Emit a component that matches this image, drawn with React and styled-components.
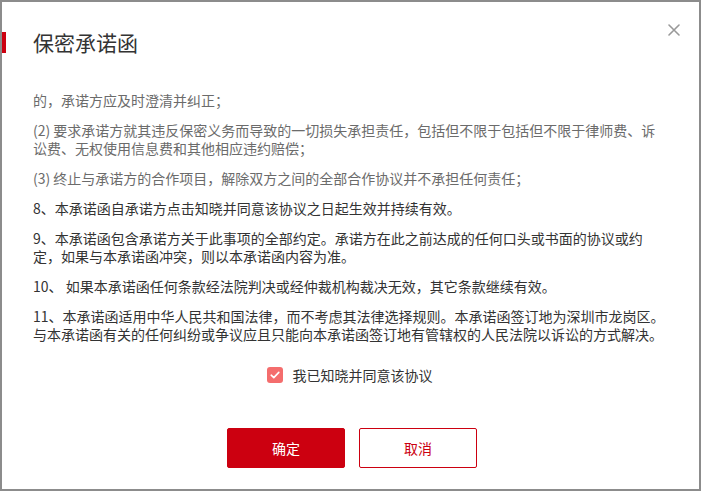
import React, { useState } from 'react'
import styled, { createGlobalStyle } from 'styled-components'

const GlobalStyle = createGlobalStyle`
  html, body {
    margin: 0;
    padding: 0;
    background: #ffffff;
  }
  body {
    font-family: "Noto Sans CJK SC", "Liberation Sans", sans-serif;
  }
`;

const terms = [
  { muted: true, lines: ['的，承诺方应及时澄清并纠正；'] },
  {
    muted: true,
    lines: [
      '(2) 要求承诺方就其违反保密义务而导致的一切损失承担责任，包括但不限于包括但不限于律师费、诉',
      '讼费、无权使用信息费和其他相应违约赔偿；',
    ],
  },
  { muted: true, lines: ['(3) 终止与承诺方的合作项目，解除双方之间的全部合作协议并不承担任何责任；'] },
  { lines: ['8、本承诺函自承诺方点击知晓并同意该协议之日起生效并持续有效。'] },
  {
    lines: [
      '9、本承诺函包含承诺方关于此事项的全部约定。承诺方在此之前达成的任何口头或书面的协议或约',
      '定，如果与本承诺函冲突，则以本承诺函内容为准。',
    ],
  },
  { lines: ['10、 如果本承诺函任何条款经法院判决或经仲裁机构裁决无效，其它条款继续有效。'] },
  {
    lines: [
      '11、本承诺函适用中华人民共和国法律，而不考虑其法律选择规则。本承诺函签订地为深圳市龙岗区。',
      '与本承诺函有关的任何纠纷或争议应且只能向本承诺函签订地有管辖权的人民法院以诉讼的方式解决。',
    ],
  },
];

const App = () => {
  const [agreed, setAgreed] = useState(true);

  return (
    <>
      <GlobalStyle />
      <Dialog>
        <CloseButton aria-label="关闭">
          <svg width="12" height="12" viewBox="0 0 12 12">
            <path d="M1 1L11 11M11 1L1 11" stroke="#999" strokeWidth="1.6" strokeLinecap="round" />
          </svg>
        </CloseButton>
        <Title>保密承诺函</Title>
        <Body>
          {terms.map((t, i) => (
            <Para key={i} $muted={t.muted}>
              {t.lines.map((line, j) => (
                <React.Fragment key={j}>
                  {j > 0 && <br />}
                  {line}
                </React.Fragment>
              ))}
            </Para>
          ))}
        </Body>
        <AgreeRow onClick={() => setAgreed((prev) => !prev)}>
          <Check $checked={agreed}>
            {agreed && (
              <svg width="10" height="8" viewBox="0 0 10 8">
                <path d="M1.2 4.2L3.8 6.6L8.8 1.4" fill="none" stroke="#fff" strokeWidth="1.6" strokeLinecap="round" strokeLinejoin="round" />
              </svg>
            )}
          </Check>
          <AgreeText>我已知晓并同意该协议</AgreeText>
        </AgreeRow>
        <Footer>
          <Button $primary>确定</Button>
          <Button>取消</Button>
        </Footer>
      </Dialog>
    </>
  )
}

export default App;

const Dialog = styled.div`
  position: relative;
  box-sizing: border-box;
  width: 701px;
  height: 491px;
  border: 2px solid #8c8c8c;
  background: #fff;
  display: flex;
  flex-direction: column;
  overflow: hidden;
`;
const CloseButton = styled.button`
  position: absolute;
  top: 21px;
  right: 18px;
  width: 14px;
  height: 14px;
  padding: 0;
  border: none;
  background: transparent;
  display: flex;
  align-items: center;
  justify-content: center;
  cursor: pointer;
`;
const Title = styled.h2`
  margin: 30px 0 0 0;
  padding-left: 27px;
  border-left: 4px solid #cc0010;
  height: 21px;
  font-size: 21px;
  line-height: 21px;
  font-weight: 400;
  color: #333;
`;
const Body = styled.div`
  margin-top: 38px;
  padding-left: 31px;
`;
const Para = styled.p`
  margin: 0 0 11.4px 0;
  font-size: 14px;
  line-height: 18.4px;
  white-space: nowrap;
  color: ${(p) => (p.$muted ? '#6b6b6b' : '#333')};
`;
const AgreeRow = styled.label`
  margin-top: 11px;
  display: flex;
  align-items: center;
  justify-content: center;
  gap: 10px;
  padding-right: 2px;
  cursor: pointer;
`;
const Check = styled.span`
  box-sizing: border-box;
  width: 16px;
  height: 16px;
  border-radius: 3px;
  background: ${(p) => (p.$checked ? '#f46d6d' : '#fff')};
  border: ${(p) => (p.$checked ? 'none' : '1px solid #ccc')};
  display: flex;
  align-items: center;
  justify-content: center;
`;
const AgreeText = styled.span`
  font-size: 14px;
  line-height: 18px;
  color: #333;
`;
const Footer = styled.div`
  margin-top: 44px;
  display: flex;
  justify-content: center;
  gap: 14px;
  padding-left: 3px;
`;
const Button = styled.button`
  box-sizing: border-box;
  width: 118px;
  height: 40px;
  border-radius: 2px;
  border: 1px solid #cc0010;
  background: ${(p) => (p.$primary ? '#cc0010' : '#fff')};
  color: ${(p) => (p.$primary ? '#fff' : '#cc0010')};
  font-family: "Noto Sans CJK SC", "Liberation Sans", sans-serif;
  font-size: 14px;
  cursor: pointer;
`;
